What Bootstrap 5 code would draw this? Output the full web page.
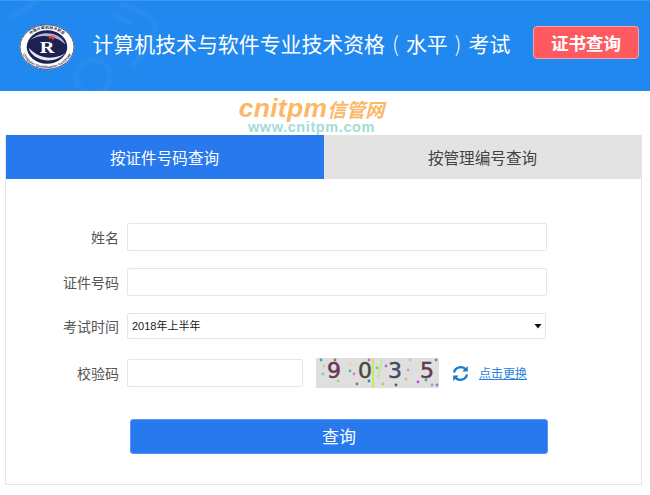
<!DOCTYPE html>
<html lang="zh-CN">
<head>
<meta charset="utf-8">
<title>证书查询</title>
<link href="https://cdn.jsdelivr.net/npm/bootstrap@5.3.0/dist/css/bootstrap.min.css" rel="stylesheet">
<style>
html,body{height:495px;overflow:hidden;background:#fff}
body{font-family:"Liberation Sans","Noto Sans CJK SC",sans-serif;color:#555;font-size:14px}
.top-bar{height:91px;background:#2088ee;border-top:1px solid #3d97f0;padding:0 11px 7px 19px;position:relative;overflow:hidden}
.top-deco{position:absolute;left:0;top:0;width:200px;height:91px}
.site-logo{width:56px;height:46px;flex:none;position:relative;margin-top:8px}
.site-title{font-family:"Noto Sans CJK SC",sans-serif;color:#fff;font-size:20.9px;margin:0 0 0 17.5px;font-weight:400;white-space:nowrap;position:relative;display:flex;line-height:30px}
.paren-box{display:inline-block;width:20.9px;text-align:center;font-weight:300}
.cert-btn{width:106px;height:33px;margin-left:auto;background:#ff5a5f;border:1px solid #ffa3a6;border-radius:4px;color:#fff;font:700 17.500px/1 "Noto Sans CJK SC",sans-serif;padding:0;position:relative}
.cert-btn:hover{background:#ff5a5f;color:#fff;border-color:#ffa3a6}
.brand-mark{height:44px;padding:5px 27px 0 0;text-align:center}
.brand-line1{font:italic 700 26.500px/24px "Liberation Sans","Noto Sans CJK SC",sans-serif;color:#fbb869;letter-spacing:.3px;display:block;height:24px}
.brand-line1 span{font-size:19px;font-family:"Noto Sans CJK SC",sans-serif;letter-spacing:0}
.brand-line2{font:700 14.500px/14px "Liberation Sans",sans-serif;color:#a3dcd8;letter-spacing:.6px;display:block;height:14px}
.query-panel{width:637px;height:350px;margin-left:5px;border:1px solid #e6e6e6;border-top:0;border-radius:0;overflow:hidden}
.tab-row{margin-left:-1px}
.tab-item{height:44px;flex:1 1 0;font:400 15.600px/44px "Noto Sans CJK SC",sans-serif;text-align:center;color:#444;background:#e3e3e3}
.tab-item.on{background:#2878ee;color:#fff;flex:0 0 319px}
.form-area{padding:44px 0 0 0}
.f-row{display:flex;align-items:center}
.f-gap-a{margin-top:17px}
.f-gap-b{margin-top:17px}
.f-gap-c{margin-top:19px}
.f-label{width:113px;text-align:right;margin:0 8px 0 0;font-family:"Noto Sans CJK SC",sans-serif;font-size:14px;color:#555;line-height:20px}
.f-input{display:block;width:420px;height:28px;border:1px solid #e6e6e6;border-radius:2px;background:#fff;padding:0 4px;outline:0}
.f-select{appearance:none;-webkit-appearance:none;width:419px;height:26px;border:1px solid #e6e6e6;border-radius:2px;background:#fff url("data:image/svg+xml,%3Csvg xmlns='http://www.w3.org/2000/svg' width='8' height='6'%3E%3Cpath d='M.5 1h7L4 5.500z' fill='%23111'/%3E%3C/svg%3E") no-repeat 406px 9px;padding:0 4px;font-family:"Liberation Sans","Noto Sans CJK SC",sans-serif;font-size:11px;color:#222;outline:0}
.f-short{width:176px}
.captcha-img{width:123px;height:30px;margin-left:13px;flex:none}
.refresh-ico{width:17px;height:17px;margin-left:13px;flex:none}
.swap-link{margin-left:10px;font-family:"Noto Sans CJK SC",sans-serif;font-size:12px;color:#2a7fe0;text-decoration:underline}
.submit-btn{display:block;width:418px;height:35px;margin:31px 0 0 124px;background:#2878ee;border:1px solid #5a97f2;border-radius:3px;color:#fff;font:400 17px/1 "Noto Sans CJK SC",sans-serif;padding:0 0 2px}
.submit-btn:hover{background:#2878ee;color:#fff;border-color:#5a97f2}
</style>
</head>
<body>
<header class="top-bar d-flex align-items-center">
  <svg class="top-deco" viewBox="0 0 200 91" fill="none" stroke="#fff" stroke-opacity=".035" stroke-width="6" aria-hidden="true">
    <circle cx="93" cy="76" r="17"/>
    <path d="M8 18L45-5M120 4Q165 14 152 38L132 68"/>
    <path d="M112 12l20 12"/>
  </svg>
  <svg class="site-logo" viewBox="0 0 58 58" preserveAspectRatio="none" aria-label="徽标">
    <circle cx="29" cy="29" r="28.500" fill="#fff"/>
    <circle cx="29" cy="29" r="28" fill="none" stroke="#23264f" stroke-width=".9"/>
    <circle cx="29" cy="29" r="21" fill="#1c2150"/>
    <defs>
      <path id="arcTop" d="M6 29A23 23 0 0 1 52 29"/>
      <path id="arcBot" d="M2.500 29A26.500 26.500 0 0 0 55.500 29"/>
    </defs>
    <text font-size="4.200" font-weight="700" fill="#23264f" font-family="Noto Sans CJK SC,sans-serif"><textPath href="#arcTop" startOffset="50%" text-anchor="middle">中国计算机技术职业</textPath></text>
    <text font-size="4" font-weight="700" fill="#23264f" font-family="Liberation Sans,sans-serif"><textPath href="#arcBot" startOffset="50%" text-anchor="middle">Computer Qualification Certificate</textPath></text>
    <path d="M10 30C12 44 34 54 48 37C36 46 20 44 10 30Z" fill="#e6e9f2"/>
    <path d="M48 26C45 12 24 5 12 20C22 12 38 14 48 26Z" fill="#aeb6d2"/>
    <text x="29" y="36" font-size="21" font-weight="700" text-anchor="middle" fill="#fff" font-family="Liberation Serif,serif">R</text>
    <path d="M31 16l5-2-2 3 4-2-3 6-1-3-3 1z" fill="#e8392f"/>
  </svg>
  <h1 class="site-title">计算机技术与软件专业技术资格<span class="paren-box">(</span>水平<span class="paren-box">)</span>考试</h1>
  <button type="button" class="btn cert-btn">证书查询</button>
</header>
<div class="brand-mark">
  <span class="brand-line1">cnitpm<span>信管网</span></span>
  <span class="brand-line2">www.cnitpm.com</span>
</div>
<main class="query-panel">
  <div class="d-flex tab-row">
    <div class="tab-item on">按证件号码查询</div>
    <div class="tab-item">按管理编号查询</div>
  </div>
  <form class="form-area">
    <div class="f-row">
      <label class="f-label" for="nm">姓名</label>
      <input class="f-input" id="nm" type="text">
    </div>
    <div class="f-row f-gap-a">
      <label class="f-label" for="cid">证件号码</label>
      <input class="f-input" id="cid" type="text">
    </div>
    <div class="f-row f-gap-b">
      <label class="f-label" for="tm">考试时间</label>
      <select class="f-select" id="tm"><option>2018年上半年</option></select>
    </div>
    <div class="f-row f-gap-c">
      <label class="f-label" for="cd">校验码</label>
      <input class="f-input f-short" id="cd" type="text">
      <svg class="captcha-img" viewBox="0 0 123 30" aria-label="验证码">
        <rect width="123" height="30" fill="#dfdfdf"/>
        <g font-family="DejaVu Sans,sans-serif" font-size="22" text-anchor="middle" stroke-width=".5">
          <text x="18" y="20" fill="#6b3450" stroke="#6b3450">9</text>
          <text x="49" y="20" fill="#4a4a3c" stroke="#4a4a3c">0</text>
          <text x="79" y="20" fill="#3f4a66" stroke="#3f4a66">3</text>
          <text x="111" y="20" fill="#62384e" stroke="#62384e">5</text>
        </g>
        <path d="M57 0V30" stroke="#bfee5a" stroke-width="2"/>
        <path d="M66 1L62 20" stroke="#b8ec8a" stroke-width="1.500"/>
        <g>
          <circle cx="5" cy="2" r="1.400" fill="#3aa"/><circle cx="19" cy="2" r="1.400" fill="#a66"/><circle cx="53" cy="2" r="1.400" fill="#c6c"/><circle cx="94" cy="2" r="1.400" fill="#db8"/><circle cx="120" cy="2" r="1.400" fill="#78a"/>
          <circle cx="8" cy="8" r="1.400" fill="#dc9"/><circle cx="34" cy="7" r="1.400" fill="#ecb"/><circle cx="70" cy="8" r="1.400" fill="#b6d"/><circle cx="92" cy="12" r="1.400" fill="#d9a"/>
          <circle cx="7" cy="16" r="1.400" fill="#6dc"/><circle cx="34" cy="13" r="1.400" fill="#5b8"/><circle cx="38" cy="16" r="1.400" fill="#d7d"/><circle cx="61" cy="10" r="1.400" fill="#7c7"/>
          <circle cx="22" cy="23" r="1.400" fill="#ad5"/><circle cx="53" cy="23" r="1.400" fill="#47b"/><circle cx="41" cy="26" r="1.400" fill="#777"/><circle cx="67" cy="26" r="1.400" fill="#cb6"/>
          <circle cx="80" cy="27" r="1.400" fill="#844"/><circle cx="102" cy="24" r="1.400" fill="#a5d"/><circle cx="110" cy="22" r="1.400" fill="#3b6"/><circle cx="121" cy="27" r="1.400" fill="#b6c"/><circle cx="116" cy="27" r="1.400" fill="#6bc"/><circle cx="90" cy="21" r="1.400" fill="#db5"/>
        </g>
      </svg>
      <svg class="refresh-ico" viewBox="0 0 17 17" fill="none" stroke="#1c7ccc" stroke-width="2.300" aria-hidden="true">
        <path d="M2 7.500A6.700 6.700 0 0 1 14 5"/>
        <path d="M15 9.500A6.700 6.700 0 0 1 3 12"/>
        <path d="M15.800 1v5.500h-5.500z" fill="#1c7ccc" stroke="none"/>
        <path d="M1.200 16v-5.500h5.500z" fill="#1c7ccc" stroke="none"/>
      </svg>
      <a class="swap-link" href="#">点击更换</a>
    </div>
    <button type="button" class="btn submit-btn">查询</button>
  </form>
</main>
</body>
</html>
